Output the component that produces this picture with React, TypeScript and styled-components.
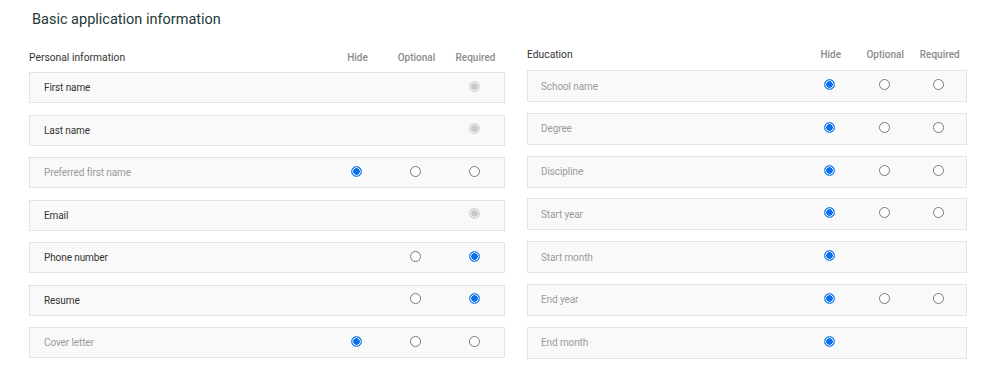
import styled, { createGlobalStyle } from 'styled-components'

type Mark = 'on' | 'off' | 'locked' | null

type Field = {
  label: string
  muted?: boolean
  marks: Mark[]
}

const personal: Field[] = [
  { label: 'First name', marks: [null, null, 'locked'] },
  { label: 'Last name', marks: [null, null, 'locked'] },
  { label: 'Preferred first name', muted: true, marks: ['on', 'off', 'off'] },
  { label: 'Email', marks: [null, null, 'locked'] },
  { label: 'Phone number', marks: [null, 'off', 'on'] },
  { label: 'Resume', marks: [null, 'off', 'on'] },
  { label: 'Cover letter', muted: true, marks: ['on', 'off', 'off'] },
]

const education: Field[] = [
  { label: 'School name', muted: true, marks: ['on', 'off', 'off'] },
  { label: 'Degree', muted: true, marks: ['on', 'off', 'off'] },
  { label: 'Discipline', muted: true, marks: ['on', 'off', 'off'] },
  { label: 'Start year', muted: true, marks: ['on', 'off', 'off'] },
  { label: 'Start month', muted: true, marks: ['on', null, null] },
  { label: 'End year', muted: true, marks: ['on', 'off', 'off'] },
  { label: 'End month', muted: true, marks: ['on', null, null] },
]

const GlobalStyle = createGlobalStyle`
  body {
    margin: 0;
    background: #ffffff;
    font-family: Roboto, 'Liberation Sans', Arial, sans-serif;
  }
`

const Page = styled.div`
  width: 999px;
  height: 383px;
  padding: 10px 0 0 29px;
  box-sizing: border-box;
  overflow: hidden;
`

const Title = styled.h2`
  margin: 0 0 0 3px;
  font-size: 14.5px;
  line-height: 20px;
  font-weight: 400;
  color: #233838;
`

const Columns = styled.div`
  display: flex;
  gap: 22px;
  align-items: flex-start;
`

const Section = styled.section<{ $width: number; $top: number }>`
  width: ${p => p.$width}px;
  padding-top: ${p => p.$top}px;
  display: flex;
  flex-direction: column;
`

const HeaderRow = styled.div<{ $below: number }>`
  display: flex;
  align-items: center;
  height: 14px;
  margin-bottom: ${p => p.$below}px;
`

const SectionName = styled.div`
  flex: 1;
  font-size: 10.3px;
  color: #333333;
`

const ColumnName = styled.div<{ $cell: number }>`
  width: ${p => p.$cell}px;
  text-align: center;
  font-size: 10px;
  font-weight: 500;
  color: #8c8c8c;
`

const Rows = styled.div<{ $gap: number }>`
  display: flex;
  flex-direction: column;
  gap: ${p => p.$gap}px;
`

const Row = styled.div<{ $height: number; $pad: number }>`
  height: ${p => p.$height}px;
  box-sizing: border-box;
  display: flex;
  align-items: center;
  padding-left: ${p => p.$pad}px;
  background: #f9f9f9;
  border: 1px solid #e3e3e3;
`

const Label = styled.div<{ $muted?: boolean }>`
  flex: 1;
  font-size: 10px;
  letter-spacing: -0.1px;
  color: ${p => (p.$muted ? '#9b9b9b' : '#333333')};
`

const Cell = styled.div<{ $cell: number }>`
  width: ${p => p.$cell}px;
  display: flex;
  justify-content: center;
  align-items: center;
  margin-top: -3px;
`

const Radio = styled.span<{ $mark: 'on' | 'off' | 'locked' }>`
  width: 11px;
  height: 11px;
  box-sizing: border-box;
  border-radius: 50%;
  border: 1px solid
    ${p => (p.$mark === 'on' ? '#1c7ff0' : p.$mark === 'locked' ? '#d2d2d2' : '#7a7a7a')};
  background: ${p =>
    p.$mark === 'on'
      ? 'radial-gradient(circle, #0a6fe8 0 3px, #ffffff 3.6px 3.9px, #3d92f2 4.3px)'
      : p.$mark === 'locked'
        ? 'radial-gradient(circle, #c9c9c9 0 3px, #f4f4f4 3.6px 3.9px, #dedede 4.3px)'
        : '#ffffff'};
`

function Block({
  name,
  fields,
  width,
  top,
  cell,
  below,
  gap,
  rowHeight,
  pad,
}: {
  name: string
  fields: Field[]
  width: number
  top: number
  cell: number
  below: number
  gap: number
  rowHeight: number
  pad: number
}) {
  return (
    <Section $width={width} $top={top}>
      <HeaderRow $below={below}>
        <SectionName>{name}</SectionName>
        <ColumnName $cell={cell}>Hide</ColumnName>
        <ColumnName $cell={cell}>Optional</ColumnName>
        <ColumnName $cell={cell}>Required</ColumnName>
      </HeaderRow>
      <Rows $gap={gap}>
        {fields.map(f => (
          <Row key={f.label} $height={rowHeight} $pad={pad}>
            <Label $muted={f.muted}>{f.label}</Label>
            {f.marks.map((m, i) => (
              <Cell key={i} $cell={cell}>
                {m && <Radio $mark={m} />}
              </Cell>
            ))}
          </Row>
        ))}
      </Rows>
    </Section>
  )
}

export default function App() {
  return (
    <>
      <GlobalStyle />
      <Page>
        <Title>Basic application information</Title>
        <Columns>
          <Block
            name="Personal information"
            fields={personal}
            width={476}
            top={20}
            cell={59}
            below={8}
            gap={11.5}
            rowHeight={31}
            pad={14}
          />
          <Block
            name="Education"
            fields={education}
            width={440}
            top={17}
            cell={54.5}
            below={9}
            gap={10.8}
            rowHeight={32}
            pad={13}
          />
        </Columns>
      </Page>
    </>
  )
}
